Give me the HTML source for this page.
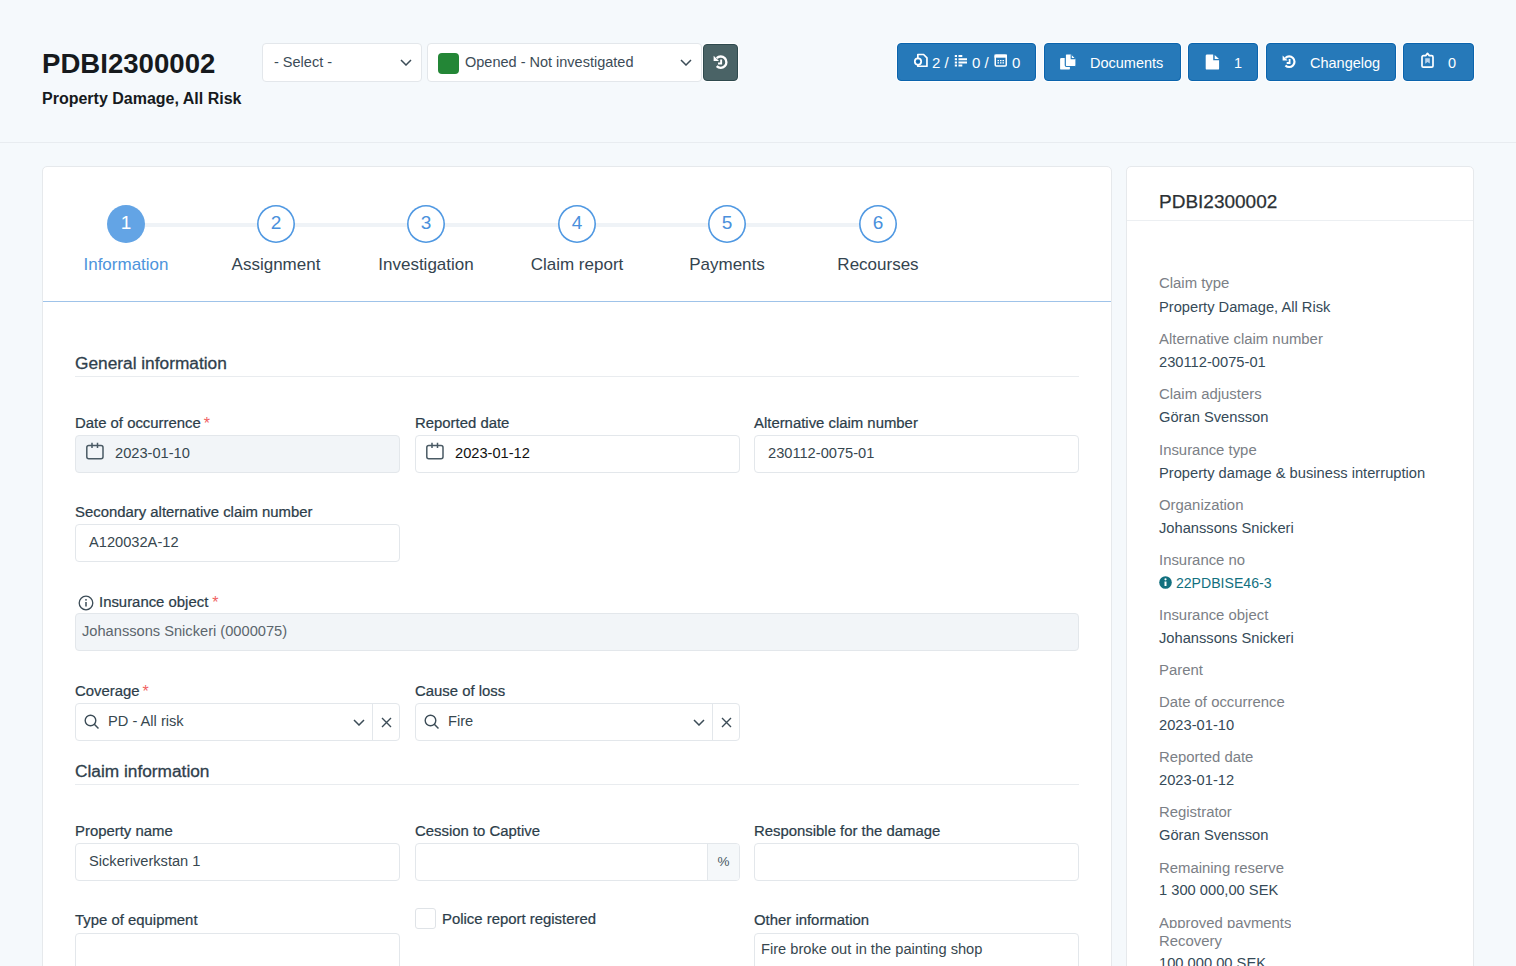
<!DOCTYPE html>
<html><head><meta charset="utf-8">
<style>
*{box-sizing:border-box;margin:0;padding:0}
html,body{width:1516px;height:966px;overflow:hidden;background:#f5f9fc;font-family:"Liberation Sans",sans-serif;color:#34454f}
.abs{position:absolute}
#hdr{position:absolute;left:0;top:0;width:1516px;height:143px;border-bottom:1px solid #e8ecf0}
.title{position:absolute;left:42px;top:46px;font-size:27.6px;font-weight:bold;color:#161a1d;line-height:36px;white-space:nowrap}
.subtitle{position:absolute;left:42px;top:88px;font-size:16px;font-weight:bold;color:#161a1d;line-height:22px;white-space:nowrap}
.sel{position:absolute;top:43px;height:39px;background:#fff;border:1px solid #e3e7eb;border-radius:4px;font-size:14.5px;color:#3c4c57;line-height:37px;white-space:nowrap}
.chev{position:absolute;width:12px;height:7px}
.btn{position:absolute;top:43px;height:38px;background:#2679b9;border:1px solid #0b64ad;border-radius:4px;box-shadow:0 0 0 1px #fff;color:#fff;font-size:14.5px;line-height:36px;white-space:nowrap}
.btn span,.btn svg{position:absolute;margin-top:1px}
.card{position:absolute;background:#fff;border:1px solid #e6e9ec;border-radius:5px}
.step.active{background:#63a4e5;box-shadow:none;color:#fff}
.step{position:absolute;width:38px;height:38px;border-radius:50%;border:0;box-shadow:inset 0 0 0 1.6px #4f98e2;color:#4a90dc;font-size:19px;text-align:center;line-height:36px;background:#fff}
.slabel{position:absolute;width:160px;text-align:center;font-size:17px;color:#34444f;white-space:nowrap;line-height:20px;margin-top:1px}
.h{position:absolute;left:75px;width:1004px;font-size:17.3px;color:#2f404c;-webkit-text-stroke:0.3px #2f404c;border-bottom:1px solid #e9ecef;line-height:20px;white-space:nowrap}
.lbl{position:absolute;font-size:14.9px;color:#2c3d4a;line-height:18px;white-space:nowrap;-webkit-text-stroke:0.22px #2c3d4a}
.req{color:#f06262;-webkit-text-stroke:0;font-size:16px;margin-left:3px;position:relative;top:1px}
.inp{position:absolute;height:38px;width:325px;background:#fff;border:1px solid #e3e7eb;border-radius:4px;font-size:14.65px;color:#37474f;line-height:36px;white-space:nowrap}
.inp.dis{background:#f2f5f8}
.inp>span{margin-top:-1px}
.rl{position:absolute;left:1159px;font-size:14.9px;color:#7b8086;white-space:nowrap;line-height:18px}
.rv{position:absolute;left:1159px;font-size:14.7px;color:#354a58;white-space:nowrap;line-height:18px}
</style></head><body>
<div id="hdr"></div>
<div class="title">PDBI2300002</div>
<div class="subtitle">Property Damage, All Risk</div>

<div class="sel" style="left:262px;width:160px"><span class="abs" style="left:11px;top:0">- Select -</span>
<svg class="chev" style="left:137px;top:15px" viewBox="0 0 12 7"><path d="M1 1l5 5 5-5" fill="none" stroke="#3c4c57" stroke-width="1.5"/></svg></div>
<div class="sel" style="left:427px;width:274.5px"><span class="abs" style="left:10px;top:9px;width:21px;height:21px;background:#238636;border-radius:4px"></span><span class="abs" style="left:37px;top:0">Opened - Not investigated</span>
<svg class="chev" style="left:252px;top:15px" viewBox="0 0 12 7"><path d="M1 1l5 5 5-5" fill="none" stroke="#3c4c57" stroke-width="1.5"/></svg></div>
<div class="abs" style="left:703px;top:43.5px;width:35px;height:37px;background:#4a6366;border:1px solid #2f4a4e;border-radius:4px;box-shadow:0 0 0 1px #fff"></div>
<svg class="abs" style="left:713px;top:54.5px" width="15" height="15" viewBox="0 0 14 14"><use href="#hist"/></svg>

<svg width="0" height="0" style="position:absolute"><defs>
<g id="hist"><path d="M3.45 2.95 A5.3 5.3 0 1 1 3.45 10.45" fill="none" stroke="#fff" stroke-width="2.2"/><path d="M0.6 0.6 L0.6 5.6 L5.6 5.6 Z" fill="#fff"/><path d="M7.6 4.1 V8 H4.7" fill="none" stroke="#fff" stroke-width="1.8"/></g>
</defs></svg>
<div class="btn" style="left:897px;width:139px"></div>
<svg class="abs" style="left:913px;top:53px" width="16" height="16" viewBox="0 0 16 16"><path d="M4.85 1.5 H10.6 L13.95 4.85 V13.25 H4.85 Z" fill="none" stroke="#fff" stroke-width="1.7" stroke-linejoin="round"/><circle cx="5" cy="8.6" r="3.2" fill="#2679b9" stroke="#fff" stroke-width="1.7"/><path d="M5 7.2v2.8M3.6 8.6h2.8" stroke="#0b64ad" stroke-width="1"/></svg>
<span class="abs" style="left:932px;top:44px;font-size:15px;line-height:38px;color:#fff;white-space:nowrap">2 /</span>
<svg class="abs" style="left:954px;top:54px" width="14" height="14" viewBox="0 0 14 14"><path d="M0.8 1h2.2v2h-2.2zM0.8 4.3h2.2v2h-2.2zM0.8 7.4h2.2v2h-2.2zM0.8 10.4h2.2v2h-2.2zM4.5 1h3.8v2h-3.8zM4.5 4.3h8.5v2h-8.5zM4.5 7.4h8.5v2h-8.5zM4.5 10.4h3.8v2h-3.8z" fill="#fff"/></svg>
<span class="abs" style="left:972px;top:44px;font-size:15px;line-height:38px;color:#fff;white-space:nowrap">0 /</span>
<svg class="abs" style="left:994px;top:54px" width="14" height="14" viewBox="0 0 14 14"><rect x="1.25" y="1.25" width="11" height="10.7" rx="1" fill="none" stroke="#fff" stroke-width="1.5"/><rect x="0.5" y="0.5" width="12.5" height="3.2" fill="#fff"/><path d="M3.5 6h1.5v1.3h-1.5zM6 6h1.5v1.3h-1.5zM8.5 6h1.5v1.3h-1.5zM3.5 8.3h1.5v1.3h-1.5zM6 8.3h1.5v1.3h-1.5zM8.5 8.3h1.5v1.3h-1.5z" fill="#fff"/></svg>
<span class="abs" style="left:1012px;top:44px;font-size:15px;line-height:38px;color:#fff;white-space:nowrap">0</span>

<div class="btn" style="left:1044px;width:137px"><span style="left:45px;top:0">Documents</span></div>
<svg class="abs" style="left:1059px;top:54px" width="18" height="17" viewBox="0 0 18 17"><rect x="1.1" y="4.1" width="9.8" height="11.5" rx="1.2" fill="#fff"/><path d="M6.3 1.2 a1.2 1.2 0 0 1 1.2 -1.2 H12.5 L17 4.5 V11.3 a1.2 1.2 0 0 1 -1.2 1.2 H7.5 a1.2 1.2 0 0 1 -1.2 -1.2 Z" fill="#fff" stroke="#267bbc" stroke-width="1.2"/><path d="M12.2 0.6 V4.6 H16.3" fill="none" stroke="#267bbc" stroke-width="1.1"/></svg>
<div class="btn" style="left:1188px;width:70px"><span style="left:45px;top:0">1</span></div>
<svg class="abs" style="left:1205px;top:54px" width="16" height="17" viewBox="0 0 16 17"><path d="M1.7 0.6 H8.2 V6.3 H14.1 V14.4 a1.2 1.2 0 0 1 -1.2 1.2 H1.9 a1.2 1.2 0 0 1 -1.2 -1.2 V1.8 a1.2 1.2 0 0 1 1 -1.2Z" fill="#fff"/><path d="M9.7 1 L14 5 H9.7Z" fill="#fff"/></svg>
<div class="btn" style="left:1266px;width:130px"><span style="left:43px;top:0">Changelog</span></div>
<svg class="abs" style="left:1282px;top:55px" width="14" height="14" viewBox="0 0 14 14"><use href="#hist"/></svg>
<div class="btn" style="left:1403px;width:71px"><span style="left:44px;top:0">0</span></div>
<svg class="abs" style="left:1421px;top:52px" width="14" height="17" viewBox="0 0 14 17"><path d="M2.3 3.6 H4.7 L6.5 1.4 L8.3 3.6 H10.7 a1.3 1.3 0 0 1 1.3 1.3 V13.9 a1.3 1.3 0 0 1 -1.3 1.3 H2.3 a1.3 1.3 0 0 1 -1.3 -1.3 V4.9 a1.3 1.3 0 0 1 1.3 -1.3Z" fill="none" stroke="#fff" stroke-width="1.7" stroke-linejoin="round"/><path d="M4.2 6.2 H8.8 V11.4 L6.5 10 L4.2 11.7Z" fill="#b9d4ee"/></svg>
<div class="card" style="left:42px;top:166px;width:1070px;height:820px"></div>
<div class="card" style="left:1126px;top:166px;width:348px;height:820px"></div>

<!-- stepper -->
<div class="abs" style="left:126px;top:223px;width:752px;height:3.5px;background:#eff3f7"></div>
<div class="step active" style="left:107px;top:204.5px">1</div>
<div class="step" style="left:257px;top:204.5px">2</div>
<div class="step" style="left:407px;top:204.5px">3</div>
<div class="step" style="left:558px;top:204.5px">4</div>
<div class="step" style="left:708px;top:204.5px">5</div>
<div class="step" style="left:859px;top:204.5px">6</div>
<div class="slabel" style="left:46px;top:254px;color:#4d94dc">Information</div>
<div class="slabel" style="left:196px;top:254px">Assignment</div>
<div class="slabel" style="left:346px;top:254px">Investigation</div>
<div class="slabel" style="left:497px;top:254px">Claim report</div>
<div class="slabel" style="left:647px;top:254px">Payments</div>
<div class="slabel" style="left:798px;top:254px">Recourses</div>
<div class="abs" style="left:43px;top:301px;width:1068px;height:1px;background:#9fc3e9"></div>

<!-- general information -->
<div class="h" style="top:353px;height:24px">General information</div>

<div class="lbl" style="left:75px;top:414px">Date of occurrence<span class="req">*</span></div>
<div class="inp dis" style="left:75px;top:435px"><svg class="abs" style="left:10px;top:6px" width="18" height="18" viewBox="0 0 18 18"><rect x="0.8" y="3.6" width="16.2" height="13.2" rx="2" fill="none" stroke="#4a5a64" stroke-width="1.5"/><path d="M6 0.7v5.3M11.5 0.7v5.3" stroke="#4a5a64" stroke-width="1.5"/></svg><span class="abs" style="left:39px;top:0">2023-01-10</span></div>

<div class="lbl" style="left:415px;top:414px">Reported date</div>
<div class="inp" style="left:415px;top:435px"><svg class="abs" style="left:10px;top:6px" width="18" height="18" viewBox="0 0 18 18"><rect x="0.8" y="3.6" width="16.2" height="13.2" rx="2" fill="none" stroke="#4a5a64" stroke-width="1.5"/><path d="M6 0.7v5.3M11.5 0.7v5.3" stroke="#4a5a64" stroke-width="1.5"/></svg><span class="abs" style="left:39px;top:0;color:#111">2023-01-12</span></div>

<div class="lbl" style="left:754px;top:414px">Alternative claim number</div>
<div class="inp" style="left:754px;top:435px"><span class="abs" style="left:13px;top:0">230112-0075-01</span></div>

<div class="lbl" style="left:75px;top:503px">Secondary alternative claim number</div>
<div class="inp" style="left:75px;top:524px"><span class="abs" style="left:13px;top:0">A120032A-12</span></div>

<div class="lbl" style="left:78px;top:593px"><svg class="abs" style="left:0;top:2px" width="16" height="16" viewBox="0 0 16 16"><circle cx="8" cy="8" r="6.8" fill="none" stroke="#3c4c57" stroke-width="1.3"/><path d="M8 7v4.5" stroke="#3c4c57" stroke-width="1.5"/><circle cx="8" cy="4.8" r="0.9" fill="#3c4c57"/></svg><span style="margin-left:21px">Insurance object</span><span class="req" style="margin-left:4px">*</span></div>
<div class="inp dis" style="left:75px;top:613px;width:1004px"><span class="abs" style="left:6px;top:0;color:#5c666d">Johanssons Snickeri (0000075)</span></div>

<div class="lbl" style="left:75px;top:682px">Coverage<span class="req">*</span></div>
<div class="inp" style="left:75px;top:703px"><svg class="abs" style="left:8px;top:10px" width="16" height="16" viewBox="0 0 16 16"><circle cx="6.5" cy="6.5" r="5.3" fill="none" stroke="#3c4c57" stroke-width="1.4"/><path d="M10.3 10.3l4.2 4.2" stroke="#3c4c57" stroke-width="1.5"/></svg><span class="abs" style="left:32px;top:0">PD - All risk</span>
<svg class="chev" style="left:277px;top:15px" viewBox="0 0 12 7"><path d="M1 1l5 5 5-5" fill="none" stroke="#3c4c57" stroke-width="1.5"/></svg>
<div class="abs" style="left:296px;top:0;width:1px;height:36px;background:#e3e7eb"></div>
<svg class="abs" style="left:305px;top:13px" width="11" height="11" viewBox="0 0 11 11"><path d="M1 1l9 9M10 1l-9 9" stroke="#3c4c57" stroke-width="1.4"/></svg></div>

<div class="lbl" style="left:415px;top:682px">Cause of loss</div>
<div class="inp" style="left:415px;top:703px"><svg class="abs" style="left:8px;top:10px" width="16" height="16" viewBox="0 0 16 16"><circle cx="6.5" cy="6.5" r="5.3" fill="none" stroke="#3c4c57" stroke-width="1.4"/><path d="M10.3 10.3l4.2 4.2" stroke="#3c4c57" stroke-width="1.5"/></svg><span class="abs" style="left:32px;top:0">Fire</span>
<svg class="chev" style="left:277px;top:15px" viewBox="0 0 12 7"><path d="M1 1l5 5 5-5" fill="none" stroke="#3c4c57" stroke-width="1.5"/></svg>
<div class="abs" style="left:296px;top:0;width:1px;height:36px;background:#e3e7eb"></div>
<svg class="abs" style="left:305px;top:13px" width="11" height="11" viewBox="0 0 11 11"><path d="M1 1l9 9M10 1l-9 9" stroke="#3c4c57" stroke-width="1.4"/></svg></div>

<!-- claim information -->
<div class="h" style="top:761px;height:24px">Claim information</div>

<div class="lbl" style="left:75px;top:822px">Property name</div>
<div class="inp" style="left:75px;top:843px"><span class="abs" style="left:13px;top:0">Sickeriverkstan 1</span></div>

<div class="lbl" style="left:415px;top:822px">Cession to Captive</div>
<div class="inp" style="left:415px;top:843px"><div class="abs" style="left:291px;top:0;width:32px;height:36px;background:#f5f8fa;border-left:1px solid #e3e7eb;border-radius:0 3px 3px 0;text-align:center;font-size:13.5px;color:#4a5a64">%</div></div>

<div class="lbl" style="left:754px;top:822px">Responsible for the damage</div>
<div class="inp" style="left:754px;top:843px"></div>

<div class="lbl" style="left:75px;top:911px">Type of equipment</div>
<div class="inp" style="left:75px;top:933px;height:60px"></div>

<div class="abs" style="left:415px;top:908px;width:21px;height:21px;border:1px solid #dfe3e7;border-radius:3px;background:#fff"></div>
<div class="lbl" style="left:442px;top:910px">Police report registered</div>

<div class="lbl" style="left:754px;top:911px">Other information</div>
<div class="inp" style="left:754px;top:933px;height:60px"><span class="abs" style="left:6px;top:1px;line-height:30px">Fire broke out in the painting shop</span></div>

<!-- right panel -->
<div class="abs" style="left:1159px;top:190px;font-size:19px;color:#2b3034;line-height:24px;white-space:nowrap;-webkit-text-stroke:0.25px #2b3034">PDBI2300002</div>
<div class="abs" style="left:1127px;top:220px;width:346px;height:1px;background:#eceff2"></div>
<div class="rl" style="top:274px">Claim type</div><div class="rv" style="top:298px">Property Damage, All Risk</div>
<div class="rl" style="top:330px">Alternative claim number</div><div class="rv" style="top:353px">230112-0075-01</div>
<div class="rl" style="top:385px">Claim adjusters</div><div class="rv" style="top:408px">Göran Svensson</div>
<div class="rl" style="top:441px">Insurance type</div><div class="rv" style="top:464px">Property damage &amp; business interruption</div>
<div class="rl" style="top:496px">Organization</div><div class="rv" style="top:519px">Johanssons Snickeri</div>
<div class="rl" style="top:551px">Insurance no</div><div class="rv" style="top:574px;color:#12707f;font-size:14.1px"><svg style="vertical-align:-1px" width="13" height="13" viewBox="0 0 13 13"><circle cx="6.5" cy="6.5" r="6.3" fill="#12707f"/><path d="M6.5 5.5v4.5" stroke="#fff" stroke-width="2"/><circle cx="6.5" cy="3.3" r="1.1" fill="#fff"/></svg> 22PDBISE46-3</div>
<div class="rl" style="top:606px">Insurance object</div><div class="rv" style="top:629px">Johanssons Snickeri</div>
<div class="rl" style="top:661px">Parent</div>
<div class="rl" style="top:693px">Date of occurrence</div><div class="rv" style="top:716px">2023-01-10</div>
<div class="rl" style="top:748px">Reported date</div><div class="rv" style="top:771px">2023-01-12</div>
<div class="rl" style="top:803px">Registrator</div><div class="rv" style="top:826px">Göran Svensson</div>
<div class="rl" style="top:859px">Remaining reserve</div><div class="rv" style="top:881px">1 300 000,00 SEK</div>
<div class="rl" style="top:914px;height:13.5px;overflow:hidden">Approved payments</div>
<div class="rl" style="top:932px">Recovery</div><div class="rv" style="top:954px">100 000,00 SEK</div>
</body></html>
